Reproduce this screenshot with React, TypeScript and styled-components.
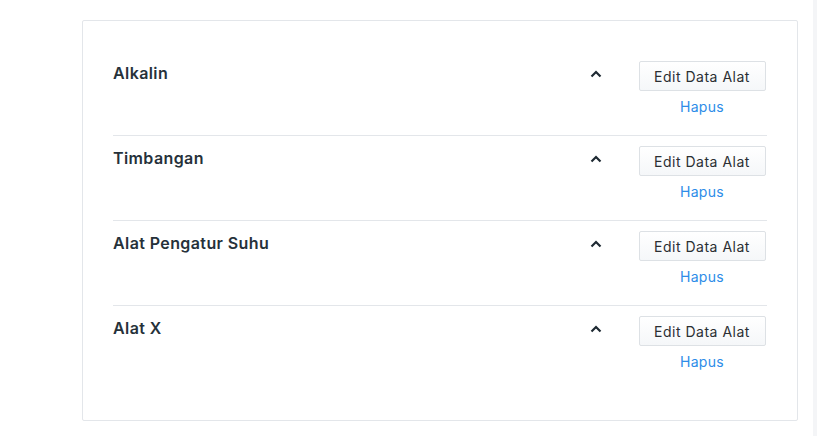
import styled, { createGlobalStyle } from "styled-components";

const GlobalStyle = createGlobalStyle`
    body {
        margin: 0;
        background: #ffffff;
        font-family: "Inter", "Open Sans", sans-serif;
    }
`;

const Page = styled.div`
    display: flex;
    width: 817px;
    height: 436px;
`;

const Main = styled.div`
    flex: 1;
    padding: 20px 15px 0 82px;
`;

const Gutter = styled.div`
    width: 4px;
    background: #f4f5f7;
`;

const Card = styled.div`
    box-sizing: border-box;
    height: 401px;
    border: 1px solid #e3e6ea;
    border-radius: 2px;
    padding: 30px 30px 0 30px;
`;

const Row = styled.div<{ last?: boolean }>`
    display: flex;
    align-items: flex-start;
    height: 85px;
    box-sizing: border-box;
    padding-top: 10px;
    border-bottom: ${(p) => (p.last ? "none" : "1px solid #e3e6ea")};
`;

const Title = styled.div`
    flex: 1;
    font-size: 16px;
    font-weight: 600;
    letter-spacing: 0.4px;
    color: #26313a;
    line-height: 24px;
`;

const Toggle = styled.div`
    width: 20px;
    height: 24px;
    margin-top: 1px;
    margin-right: 32px;
    display: flex;
    align-items: center;
    justify-content: center;
`;

const Actions = styled.div`
    width: 128px;
    margin-right: 1px;
    display: flex;
    flex-direction: column;
    align-items: center;
`;

const EditButton = styled.button`
    box-sizing: border-box;
    width: 127px;
    height: 30px;
    padding: 0;
    border: 1px solid #dde1e5;
    border-radius: 2px;
    background: linear-gradient(#ffffff, #f5f7f9);
    font-family: inherit;
    font-size: 14px;
    letter-spacing: 0.5px;
    color: #2b2f33;
    cursor: pointer;
`;

const DeleteLink = styled.a`
    margin-top: 7px;
    font-size: 14px;
    letter-spacing: 0.3px;
    color: #2d8ce8;
    text-decoration: none;
    line-height: 18px;
`;

const Chevron = () => (
    <svg width="12" height="8" viewBox="0 0 12 8">
        <path d="M1.5 6.5 L6 2 L10.5 6.5" fill="none" stroke="#1f2a33" strokeWidth="2.2" />
    </svg>
);

const items = ["Alkalin", "Timbangan", "Alat Pengatur Suhu", "Alat X"];

export default function App() {
    return (
        <>
            <GlobalStyle />
            <Page>
                <Main>
                    <Card>
                        {items.map((name, i) => (
                            <Row key={name} last={i === items.length - 1}>
                                <Title>{name}</Title>
                                <Toggle>
                                    <Chevron />
                                </Toggle>
                                <Actions>
                                    <EditButton>Edit Data Alat</EditButton>
                                    <DeleteLink href="#">Hapus</DeleteLink>
                                </Actions>
                            </Row>
                        ))}
                    </Card>
                </Main>
                <Gutter />
            </Page>
        </>
    );
}
